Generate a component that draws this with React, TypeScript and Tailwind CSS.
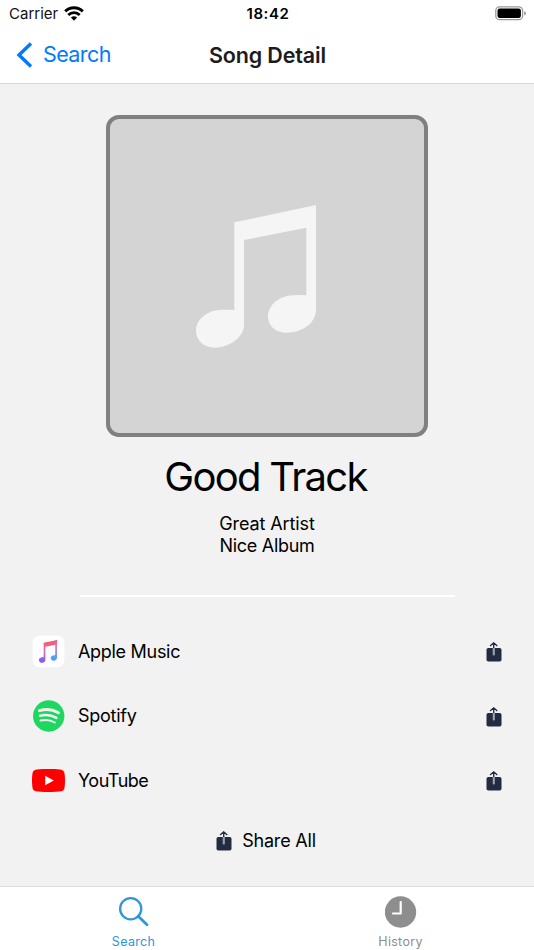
type IconProps = { className?: string };

function NoteShape({ fill }: { fill: string }) {
  return (
    <path
      fill={fill}
      d="M54.3 32.3 L136 15 V120 C136 133 122 142.7 106.7 142.7 C96 142.7 88 136 88 126.7 C88 115 99 105.7 113 105.2 Q120 104.6 126.3 105.3 V37.7 L64 50 V136 C63 148 49 157.7 34.3 157.7 C23.500 157.7 16 150 16 140.500 C16 130 27 120 42 119.800 Q48 119.400 54.3 120 Z"
    />
  );
}

function WifiIcon() {
  return (
    <svg className="-mt-[2px] h-[15px] w-5" viewBox="0 0 20 15" fill="none" stroke="#000" strokeWidth="2.9">
      <path d="M1.200 5.400 C6.200 .6 13.800 .6 18.800 5.400" />
      <path d="M4.300 9 C7.600 5.800 12.400 5.800 15.700 9" />
      <path d="M6.900 11.600 Q10 9 13.100 11.600 L10 14.700 Z" fill="#000" stroke="none" />
    </svg>
  );
}

function BatteryIcon() {
  return (
    <svg className="-mt-[2px] h-[15px] w-8" viewBox="0 0 32 15" fill="none">
      <rect x=".8" y=".8" width="26.800" height="12.900" rx="3.800" stroke="#999" strokeWidth="1.300" />
      <rect x="2.500" y="2.500" width="23.400" height="9.500" rx="2.200" fill="#000" />
      <path d="M29.200 5 Q31 5.700 31 7.250 Q31 8.800 29.200 9.500 Z" fill="#999" />
    </svg>
  );
}

function ShareIcon({ className }: IconProps) {
  return (
    <svg className={className} viewBox="0 0 16 20" fill="none">
      <rect x=".5" y="6" width="15" height="13.500" rx="1.800" fill="#222b40" />
      <path d="M7.700 5 V13.300" stroke="#d8dadd" strokeWidth="1.800" />
      <path d="M7.700 1.200 V13" stroke="#7b8290" strokeWidth=".8" />
      <path d="M7.700 .6 V6 M4.100 4 L7.700 .8 L11.300 4" stroke="#222b40" strokeWidth="1.300" />
    </svg>
  );
}

function AppleMusicIcon() {
  return (
    <svg className="size-[33px]" viewBox="0 0 32 32">
      <defs>
        <linearGradient id="noteLeft" x1="0" y1="0" x2="0" y2="1">
          <stop offset=".15" stopColor="#f55e79" />
          <stop offset=".5" stopColor="#dc6fc3" />
          <stop offset="1" stopColor="#7855ff" />
        </linearGradient>
        <linearGradient id="noteRight" x1="0" y1="0" x2="0" y2="1">
          <stop offset="0" stopColor="#f65d78" />
          <stop offset=".42" stopColor="#b889db" />
          <stop offset="1" stopColor="#35a4f7" />
        </linearGradient>
      </defs>
      <rect x=".2" y=".2" width="31.600" height="31.600" rx="7" fill="#fff" stroke="#e8e8e8" strokeWidth=".4" />
      <path d="M11.300 7.400 L24.300 4.900 V9.300 L13 11.500 V24 C13 26 11.500 26.900 9.700 26.900 C8 26.900 6.800 25.900 6.800 24.400 C6.800 21.700 9.300 21.900 11.300 21.300 Z" fill="url(#noteLeft)" />
      <path d="M22.500 5.300 L24.300 4.900 V21.500 C24.300 23.700 22.800 24.900 21 24.900 C19.300 24.900 18.100 23.900 18.100 22.400 C18.100 19.800 20.600 19.900 22.500 19.300 Z" fill="url(#noteRight)" />
    </svg>
  );
}

function SpotifyIcon() {
  return (
    <svg className="size-8" viewBox="0 0 32 32" fill="none" stroke="#f2f2f2" strokeLinecap="round">
      <circle cx="15.700" cy="16" r="15.700" fill="#1ed760" stroke="none" />
      <path d="M6.400 10.600 C12.500 8.800 20.100 9.600 25.500 12.700" strokeWidth="3" />
      <path d="M7 15.800 C12.600 14.300 18.700 15 23.500 17.900" strokeWidth="2.500" />
      <path d="M7.500 20.500 C12.500 19.400 17.400 19.900 21.800 22.500" strokeWidth="2" />
    </svg>
  );
}

function YouTubeIcon() {
  return (
    <svg className="h-[23px] w-[33px]" viewBox="0 0 32 23" preserveAspectRatio="none">
      <path
        d="M16 0 C23 0 26 .3 28.400 .8 C30 1.200 31 2.200 31.400 3.800 C32.200 8 32.200 15 31.400 19.200 C31 20.800 30 21.800 28.400 22.200 C23 23.200 9 23.200 3.600 22.200 C2 21.800 1 20.800 .6 19.200 C-.2 15 -.2 8 .6 3.800 C1 2.200 2 1.200 3.600 .8 C6 .3 9 0 16 0 Z"
        fill="#f00"
      />
      <path d="M12.800 6.700 L21.100 11.500 L12.800 16.300 Z" fill="#fff" />
    </svg>
  );
}

const services = [
  { name: "Apple Music", icon: <AppleMusicIcon />, tracking: "tracking-[-0.3px]" },
  { name: "Spotify", icon: <SpotifyIcon />, tracking: "tracking-[-0.25px]" },
  { name: "YouTube", icon: <YouTubeIcon />, tracking: "tracking-[-0.5px]" },
];

function Header() {
  return (
    <header className="h-[84px] shrink-0 border-b border-[#d8d8d8] bg-white">
      <div className="grid h-7 grid-cols-3 items-center pl-[9px] pr-[7px]">
        <div className="flex items-center gap-[6px] text-[15px] text-[#111]">
          <span>Carrier</span>
          <WifiIcon />
        </div>
        <span className="text-center text-[15px] font-semibold tracking-[0.6px]">18:42</span>
        <div className="flex justify-end">
          <BatteryIcon />
        </div>
      </div>
      <div className="grid h-[54px] grid-cols-3 items-center px-4">
        <a className="flex items-center gap-[10px] text-[21.500px] tracking-[-0.6px] text-[#007aff]">
          <svg className="-mt-px h-[26px] w-[17px]" viewBox="0 0 17 26" fill="none" stroke="currentColor" strokeWidth="3.400">
            <path d="M15 1.500 L3 13 L15 24.500" />
          </svg>
          <span className="-mt-px">Search</span>
        </a>
        <h1 className="whitespace-nowrap pl-px text-center text-[21.500px] font-semibold tracking-[-0.15px] text-[#1c1c1e]">
          Song Detail
        </h1>
      </div>
    </header>
  );
}

function TabBar() {
  return (
    <nav className="grid h-16 shrink-0 grid-cols-2 border-t border-[#dedede] bg-white text-[12.500px] tracking-[0.3px]">
      <div className="flex flex-col items-center pt-[9px] text-[#2f95dc]">
        <svg className="h-8 w-8" viewBox="0 0 32 32" fill="none" stroke="currentColor">
          <circle cx="12.700" cy="12.800" r="10.600" strokeWidth="2.300" />
          <path d="M20.200 20.300 L29 28.800" strokeWidth="2.800" strokeLinecap="round" />
        </svg>
        <span className="mt-[5px] leading-[18px]">Search</span>
      </div>
      <div className="flex flex-col items-center pt-[9px] text-[#8e8e8f]">
        <svg className="h-8 w-8" viewBox="0 0 32 32" fill="none">
          <circle cx="15.500" cy="16" r="15.700" fill="currentColor" />
          <path d="M15.700 6 V17.500 H8" stroke="#fff" strokeWidth="2.200" strokeLinecap="round" strokeLinejoin="round" />
        </svg>
        <span className="mt-[5px] leading-[18px]">History</span>
      </div>
    </nav>
  );
}

export default function App() {
  return (
    <div className="flex h-[950px] w-full flex-col overflow-hidden bg-[#f2f2f2] font-[Inter,sans-serif] text-black">
      <Header />
      <main className="flex flex-1 flex-col items-center pt-[31px]">
        <div className="size-[322px] shrink-0 overflow-hidden rounded-[13px] border-4 border-[#808080] bg-[#d4d4d4]">
          <svg className="size-full" viewBox="-70 -71 314 314">
            <NoteShape fill="#f5f5f5" />
          </svg>
        </div>
        <h2 className="mt-[15px] pr-[3px] text-[40px] leading-[50px] tracking-[-1.700px]">Good Track</h2>
        <div className="mt-[11px] text-center text-[18px] leading-[22px]">
          <p className="tracking-[-0.1px]">Great Artist</p>
          <p className="tracking-[-0.3px]">Nice Album</p>
        </div>
        <div className="mt-[38px] h-[2px] w-[375px] shrink-0 bg-white" />
        <ul className="mt-[22px] w-full pl-8 pr-8">
          {services.map((s) => (
            <li key={s.name} className="flex h-[64.500px] items-center">
              <div className="flex w-[33px] justify-center">{s.icon}</div>
              <span className={`ml-[13px] flex-1 text-[18px] ${s.tracking}`}>{s.name}</span>
              <ShareIcon className="mt-[2px] h-5 w-4" />
            </li>
          ))}
        </ul>
        <button className="mt-[15px] flex items-center gap-[10px] pr-[2px] text-[18px] leading-[26px] tracking-[-0.2px]">
          <ShareIcon className="h-5 w-4" />
          Share All
        </button>
      </main>
      <TabBar />
    </div>
  );
}
